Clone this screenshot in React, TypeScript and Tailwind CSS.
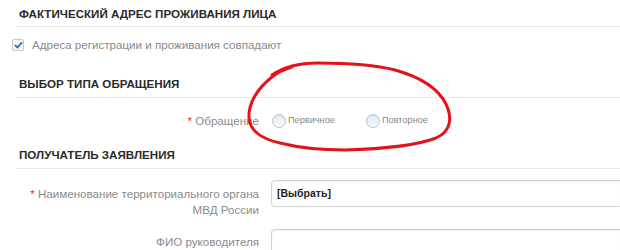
import React from "react";

function Radio({ label }: { label: string }) {
  return (
    <div className="flex items-center gap-[2px]">
      <span className="h-[14px] w-[14px] rounded-full border border-[#b9c6d6] bg-gradient-to-b from-[#e4ebf3] to-[#f6f8fb] shadow-[inset_0_1px_1px_rgba(0,0,0,0.08)]" />
      <span className="text-[9.2px] text-[#888]">{label}</span>
    </div>
  );
}

export default function App() {
  return (
    <div
      className="relative h-[250px] w-[620px] overflow-hidden bg-white"
      style={{ fontFamily: '"Liberation Sans", Arial, sans-serif' }}
    >
      <div className="flex flex-col">
        <div className="pt-[9px]">
          <div className="ml-[17px] border-b border-[#e6e6e6] pb-[7px] pl-[2px] text-[11.6px] font-bold uppercase leading-[10px] text-[#2a2a2a]">
            Фактический адрес проживания лица
          </div>
        </div>
        <div className="mt-[11px] flex items-center gap-[8px] pl-[12px]">
          <span className="flex h-[12px] w-[12px] items-center justify-center rounded-[2px] border border-[#c5cbd3] bg-[#f3f5f8]">
            <svg width="9" height="8" viewBox="0 0 9 8">
              <path d="M1 4.2 L3.4 6.5 L8 1.3" fill="none" stroke="#2b6fb6" strokeWidth="1.8" />
            </svg>
          </span>
          <span className="text-[11.6px] leading-[14px] text-[#8a8a8a]">
            Адреса регистрации и проживания совпадают
          </span>
        </div>

        <div className="mt-[27px] ml-[17px] border-b border-[#e6e6e6] pb-[8px] pl-[2px] text-[11.6px] font-bold uppercase leading-[10px] text-[#2a2a2a]">
          Выбор типа обращения
        </div>

        <div className="mt-[16px] flex items-center">
          <div className="w-[259px] text-right text-[11.6px] leading-[14px] text-[#8a8a8a]">
            <span className="text-[#e03030]">*</span> Обращение
          </div>
          <div className="ml-[13px] flex items-center gap-[31px]">
            <Radio label="Первичное" />
            <Radio label="Повторное" />
          </div>
        </div>

        <div className="mt-[22px] ml-[17px] border-b border-[#e6e6e6] pb-[8px] pl-[2px] text-[11.6px] font-bold uppercase leading-[10px] text-[#2a2a2a]">
          Получатель заявления
        </div>

        <div className="mt-[11px] flex items-start">
          <div className="mt-[6px] w-[259px] text-right text-[11.6px] leading-[16px] text-[#8a8a8a]">
            <span className="text-[#e03030]">*</span> Наименование территориального органа
            <br />
            МВД России
          </div>
          <div className="ml-[12px] flex h-[27px] flex-1 items-center rounded-l-[4px] border border-r-0 border-[#cfd3d8] pl-[5px] text-[10.5px] font-bold text-[#222] shadow-[inset_0_1px_2px_rgba(0,0,0,0.06)]">
            [Выбрать]
          </div>
        </div>

        <div className="mt-[11px] flex items-start">
          <div className="mt-[5px] w-[259px] text-right text-[11.6px] leading-[16px] text-[#8a8a8a]">
            ФИО руководителя
          </div>
          <div className="ml-[12px] h-[27px] flex-1 rounded-l-[4px] border border-r-0 border-[#cfd3d8] shadow-[inset_0_1px_2px_rgba(0,0,0,0.06)]" />
        </div>
      </div>

      <svg
        className="pointer-events-none absolute left-0 top-0"
        width="620"
        height="250"
        viewBox="0 0 620 250"
      >
        <path
          d="M292 67 C 285 69, 278 72, 272 77 C 258 88, 248 103, 249 118 C 250 131, 262 139, 280 143 C 300 148, 320 150, 345 150 C 380 149, 415 146, 436 138 C 452 131, 452 117, 446 104 C 438 88, 420 77, 395 70 C 372 64, 345 63, 318 63 C 300 63, 285 66, 272 75"
          fill="none"
          stroke="#e3121b"
          strokeWidth="3"
          strokeLinecap="round"
          strokeLinejoin="round"
        />
      </svg>
    </div>
  );
}
